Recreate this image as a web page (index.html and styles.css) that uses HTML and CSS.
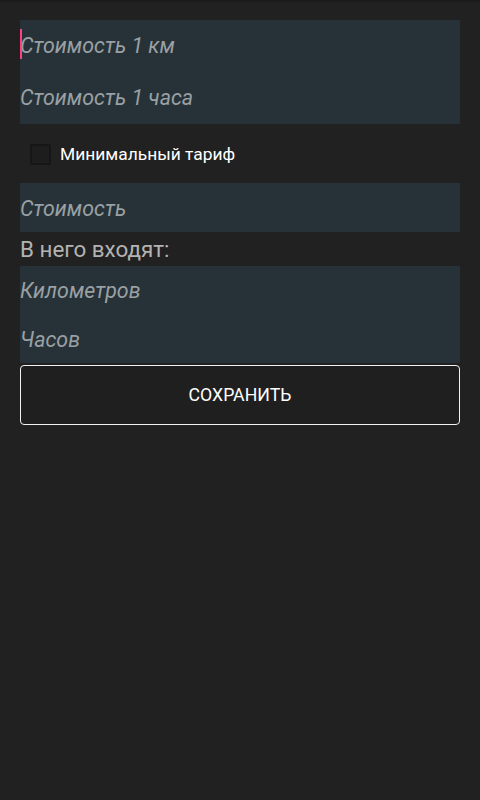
FILE: index.html
```html
<!DOCTYPE html>
<html lang="ru">
<head>
<meta charset="utf-8">
<link rel="stylesheet" href="styles.css">
</head>
<body>
<div class="statusbar"></div>
<main class="screen">
  <section class="panel">
    <div class="field field-first"><span class="cursor"></span><span class="hint">Стоимость 1 км</span></div>
    <div class="field"><span class="hint">Стоимость 1 часа</span></div>
  </section>
  <label class="check-row">
    <span class="checkbox"></span>
    <span class="check-label">Минимальный тариф</span>
  </label>
  <section class="panel panel-single">
    <div class="field"><span class="hint">Стоимость</span></div>
  </section>
  <div class="section-title">В него входят:</div>
  <section class="panel panel-tight">
    <div class="field field-a"><span class="hint">Километров</span></div>
    <div class="field field-b"><span class="hint">Часов</span></div>
  </section>
  <button class="save-btn">СОХРАНИТЬ</button>
</main>
</body>
</html>
```
FILE: styles.css
```css
html, body {
  margin: 0;
  padding: 0;
  background: #212121;
  width: 480px;
  height: 800px;
  overflow: hidden;
  font-family: Roboto, "Noto Sans", sans-serif;
}
.statusbar {
  height: 2px;
  background: #1b1b1b;
}
.screen {
  padding: 18px 20px 0 20px;
  display: flex;
  flex-direction: column;
}
.panel {
  background: #263238;
  display: flex;
  flex-direction: column;
}
.field {
  position: relative;
  padding: 14px 0 14px 0;
  line-height: 24px;
  height: 24px;
}
.hint {
  font-size: 21.4px;
  font-style: italic;
  color: #9aa0a3;
}
.cursor {
  position: absolute;
  left: 0;
  top: 9px;
  width: 2px;
  height: 30px;
  background: #ff4081;
}
.panel-single .field {
  padding: 14px 0 11px 0;
}
.check-row {
  display: flex;
  align-items: center;
  height: 59px;
  padding-left: 10px;
  gap: 9px;
}
.checkbox {
  width: 17px;
  height: 17px;
  border: 2px solid #161616;
  border-radius: 2px;
  background: #1d1d1d;
  margin-top: 1px;
}
.check-label {
  color: #ffffff;
  font-size: 17.4px;
  margin-top: 0px;
}
.section-title {
  color: #b3b3b3;
  font-size: 22.4px;
  line-height: 34px;
  height: 34px;
}
.panel-tight .field-a {
  padding: 13px 0 11px 0;
}
.panel-tight .field-b {
  padding: 14px 0 11px 0;
}
.save-btn {
  margin-top: 2px;
  height: 60px;
  background: #1f1f1f;
  border: 1.5px solid #f2f2f2;
  border-radius: 4px;
  color: #ffffff;
  font-family: Roboto, "Noto Sans", sans-serif;
  font-size: 17.7px;
  padding: 0;
  display: flex;
  align-items: center;
  justify-content: center;
}
```
